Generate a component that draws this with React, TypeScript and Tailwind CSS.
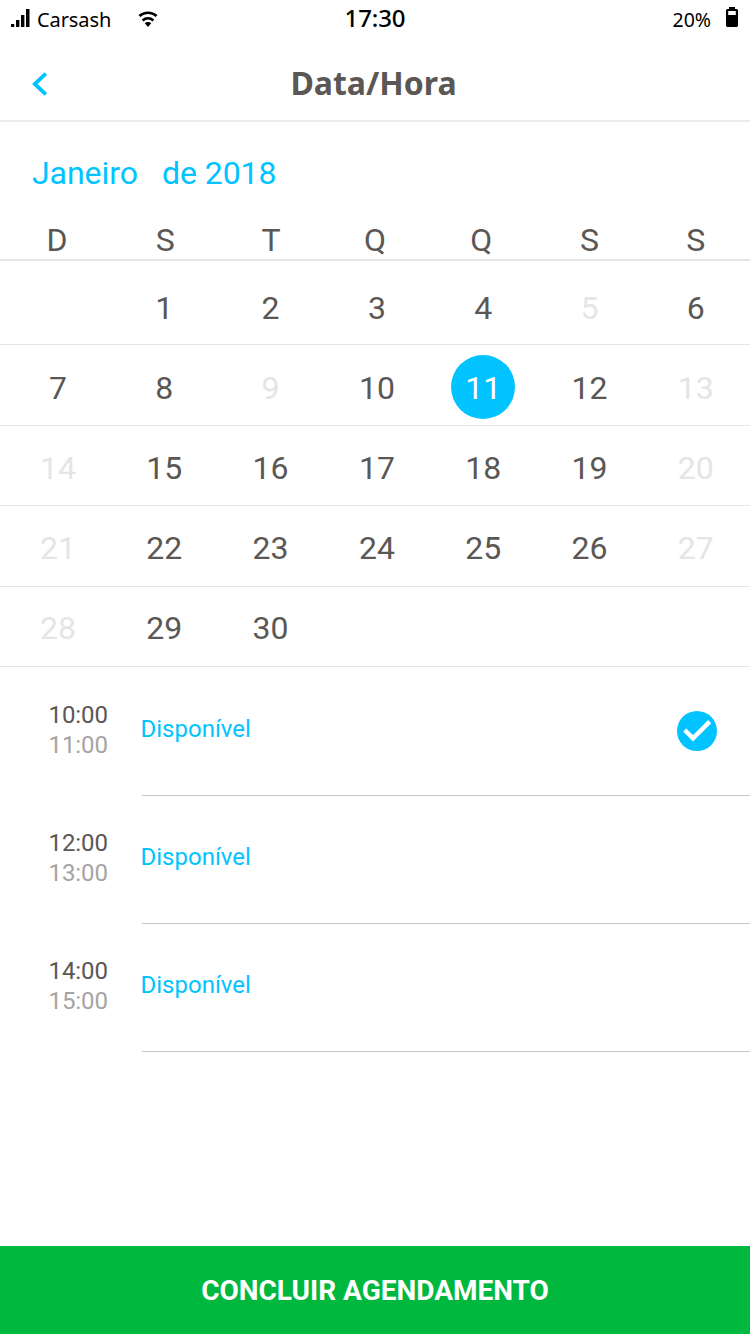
import React from "react";

type Day = { n: number | null; off?: boolean; selected?: boolean };
type Week = { className: string; days: Day[] };

const on = (n: number): Day => ({ n });
const off = (n: number): Day => ({ n, off: true });
const blank: Day = { n: null };

const weekdays = [
  { label: "D", shift: "pr-[2px]" },
  { label: "S", shift: "pl-[2px]" },
  { label: "T", shift: "pl-px" },
  { label: "Q", shift: "pr-[4px]" },
  { label: "Q", shift: "pr-[4px]" },
  { label: "S", shift: "" },
  { label: "S", shift: "" },
];

const weeks: Week[] = [
  { className: "h-[84px] pt-7", days: [blank, on(1), on(2), on(3), on(4), off(5), on(6)] },
  {
    className: "h-[81px] pt-6",
    days: [on(7), on(8), off(9), on(10), { n: 11, selected: true }, on(12), off(13)],
  },
  { className: "h-20 pt-[23px]", days: [off(14), on(15), on(16), on(17), on(18), on(19), off(20)] },
  { className: "h-[81px] pt-[23px]", days: [off(21), on(22), on(23), on(24), on(25), on(26), off(27)] },
  { className: "h-20 pt-[22px]", days: [off(28), on(29), on(30), blank, blank, blank, blank] },
];

const slots = [
  { start: "10:00", end: "11:00", checked: true },
  { start: "12:00", end: "13:00", checked: false },
  { start: "14:00", end: "15:00", checked: false },
];

function StatusBar() {
  return (
    <div className="grid h-[38px] grid-cols-3 items-start font-['Noto_Sans',sans-serif] text-black">
      <div className="flex items-start pl-[11px]">
        <svg className="mt-[9px]" width="19" height="18" viewBox="0 0 19 18">
          <path d="M0 15h3.300v3H0zM5 11h3.400v7H5zM10 6h3.400v12H10zM15 0h3.500v18H15z" />
        </svg>
        <span className="ml-[7px] mt-[6px] w-[74px] text-[20px] leading-[27px] tracking-[-0.1px]">Carsash</span>
        <svg className="ml-[27px] mt-[11px]" width="20" height="16" viewBox="0 0 20 16" fill="none" stroke="#000" strokeWidth="2.6">
          <path d="M1.400 5C6.400.6 13.600.6 18.600 5" />
          <path d="M4.600 9.400c3.200-2.700 7.600-2.700 10.800 0" />
          <path d="M6.800 12.300c1.700-1.700 4.700-1.700 6.400 0L10 16z" fill="#000" stroke="none" />
        </svg>
      </div>
      <span className="mt-[2px] text-center text-[24px] font-medium leading-8 tracking-[-0.1px]">17:30</span>
      <div className="flex items-start justify-end pr-3">
        <span className="mt-[6px] text-[19.5px] leading-[27px]">20%</span>
        <svg className="ml-[15px] mt-[7px]" width="12" height="20" viewBox="0 0 12 20">
          <path fillRule="evenodd" d="M3 0h6v2h2l1 1v16l-1 1H1l-1-1V3l1-1h2zM2.200 4v4h7.600V4z" />
        </svg>
      </div>
    </div>
  );
}

function DayCell({ day }: { day: Day }) {
  if (day.selected) {
    return (
      <span className="-mb-3 -mt-[14px] flex size-16 items-center justify-center justify-self-center rounded-full bg-[#00c3ff] pt-[2px] text-white">
        {day.n}
      </span>
    );
  }
  return <span className={day.off ? "text-center text-[#e5e5e5]" : "text-center"}>{day.n}</span>;
}

export default function App() {
  return (
    <div className="flex h-[1334px] w-[750px] flex-col overflow-hidden bg-white font-[Roboto,sans-serif] text-[#5b5755]">
      <StatusBar />
      <header className="grid h-[84px] grid-cols-[1fr_auto_1fr] items-start border-b-2 border-[#ebebeb] pr-[3px]">
        <button aria-label="Voltar" className="ml-8 mt-[34px] w-4">
          <svg width="16" height="24" viewBox="0 0 16 24" fill="none" stroke="#00c3ff" strokeWidth="3.8">
            <path d="M13.800 1.700 2.800 12l11 10.300" />
          </svg>
        </button>
        <h1 className="mt-[23px] font-['Noto_Sans',sans-serif] text-[32px] font-bold leading-[44px]">Data/Hora</h1>
      </header>

      <div className="flex h-[98px] items-start gap-6 pl-8 pt-8 text-[32px] leading-[38px] tracking-[-0.05px] text-[#00c3ff]">
        <span>Janeiro</span>
        <span>de 2018</span>
      </div>

      <div className="grid h-[41px] grid-cols-7 border-b-2 border-[#e5e5e5] pl-[4.8px] pr-px pt-px text-center text-[32px] leading-[38px]">
        {weekdays.map((d, i) => (
          <span key={i} className={d.shift}>
            {d.label}
          </span>
        ))}
      </div>

      {weeks.map((w, i) => (
        <div
          key={i}
          className={`grid shrink-0 grid-cols-7 border-b border-[#e5e5e5] pl-[4.8px] pr-px text-[32px] leading-[38px] ${w.className}`}
        >
          {w.days.map((d, j) => (
            <DayCell key={j} day={d} />
          ))}
        </div>
      ))}

      <div className="flex flex-col pt-px">
        {slots.map((s) => (
          <div key={s.start} className="flex h-32">
            <div className="w-[142px] pl-[48.5px] pt-8 text-[24px] leading-[30px] tracking-[-0.1px]">
              <div>{s.start}</div>
              <div className="text-[#a6a4a3]">{s.end}</div>
            </div>
            <div className="flex grow items-start justify-between border-b border-[#c8c8c8] pr-[33px]">
              <span className="-ml-[1.5px] mt-[46px] text-[24px] leading-[30px] text-[#00c3ff]">Disponível</span>
              {s.checked && (
                <svg className="mt-[43px]" width="40" height="40" viewBox="0 0 40 40" fill="none">
                  <circle cx="20" cy="20" r="20" fill="#00c3ff" />
                  <path d="M7.700 19 16 27.300 32.700 10.700" stroke="#fff" strokeWidth="4.500" />
                </svg>
              )}
            </div>
          </div>
        ))}
      </div>

      <button className="mt-auto h-[88px] shrink-0 bg-[#00b83e] text-[28px] font-bold leading-[33px] text-white">
        CONCLUIR AGENDAMENTO
      </button>
    </div>
  );
}
